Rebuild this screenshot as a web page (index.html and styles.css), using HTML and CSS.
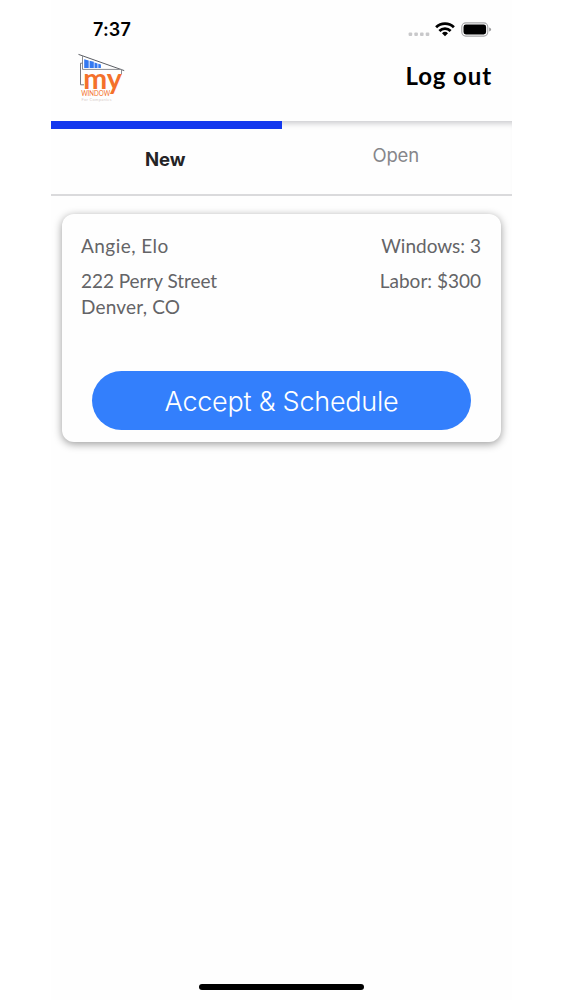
FILE: index.html
```html
<!DOCTYPE html>
<html lang="en">
<head>
    <meta charset="UTF-8">
    <meta name="viewport" content="width=device-width, initial-scale=1.0">
    <title>My Window</title>
    <link rel="stylesheet" href="styles.css">
</head>
<body>

<div class="screen">
    <div class="status-bar">
        <span class="time">7:37</span>
        <svg class="status-icons" width="84" height="20" viewBox="0 0 84 20">
            <g fill="#c8c8ca">
                <rect x="0.6" y="12.5" width="3.6" height="3.6" rx="1"/>
                <rect x="6.3" y="12.5" width="3.6" height="3.6" rx="1"/>
                <rect x="12" y="12.5" width="3.6" height="3.6" rx="1"/>
                <rect x="17.7" y="12.5" width="3.6" height="3.6" rx="1"/>
            </g>
            <g fill="none" stroke="#000" stroke-width="2.8">
                <path d="M28.1 7.3a12.8 12.8 0 0 1 17.8 0"/>
                <path d="M31.4 11a8 8 0 0 1 11.2 0"/>
            </g>
            <path d="M37 16.3l-3-3a4.3 4.3 0 0 1 6 0z"/>
            <rect x="53.8" y="2.9" width="26" height="13.2" rx="4" fill="none" stroke="#a5a5a7" stroke-width="1.1"/>
            <rect x="55.5" y="4.6" width="22.6" height="9.8" rx="2.4"/>
            <path d="M81.2 7.4q1.9.6 1.9 2.1t-1.9 2.1z" fill="#98989a"/>
        </svg>
    </div>

    <div class="header">
        <svg class="logo" width="50" height="50" viewBox="0 0 50 50">
            <g fill="none" stroke="#5a5d63" stroke-width="1">
                <path d="M.5 1.4L46.2 17.6"/>
                <path d="M4.5 3v13.4H43.5v5" stroke="#8a8c91"/>
                <path d="M4.5 10.2H2.5v21.6H6" stroke="#77797e"/>
            </g>
            <path d="M6.2 6.2l4.5 1.2v7.6H6.2zM11.6 7.8l4.2 1V15h-4.2zM16.5 9.5l3 .9V15h-3zM20.3 10.8l2.6.8V15h-2.6z" fill="#3479f0"/>
            <text class="logo-my" x="5.3" y="36" textLength="38.6" lengthAdjust="spacingAndGlyphs">my</text>
            <text class="logo-window" x="3.2" y="43.2" textLength="29" lengthAdjust="spacingAndGlyphs">WINDOW</text>
            <text class="logo-sub" x="3.5" y="48" textLength="30">For Companies</text>
        </svg>
        <a class="logout">Log out</a>
    </div>

    <div class="tabs">
        <div class="tab active">New</div>
        <div class="tab">Open</div>
    </div>

    <div class="content">
        <div class="card">
            <div class="row">
                <span class="name">Angie, Elo</span>
                <span class="windows">Windows: 3</span>
            </div>
            <div class="row">
                <span><span class="street">222 Perry Street</span><br><span class="city">Denver, CO</span></span>
                <span class="labor">Labor: $300</span>
            </div>
            <button class="accept" type="button"><span>Accept &amp; Schedule</span></button>
        </div>
    </div>

    <div class="home-indicator"></div>
</div>

</body>
</html>
```
FILE: styles.css
```css
* {
    box-sizing: border-box;
}
body {
    margin: 0;
    background-color: #fff;
    font-family: Lato, sans-serif;
}
.screen {
    display: flex;
    flex-direction: column;
    width: 461px;
    height: 1000px;
    margin-left: 51px;
    background-color: #fefefe;
}
.status-bar {
    display: flex;
    justify-content: space-between;
    align-items: flex-start;
    height: 52px;
    padding: 20px 20px 0 42px;
}
.time {
    font-family: Inter, sans-serif;
    font-size: 18px;
    font-weight: 600;
    line-height: 20px;
    letter-spacing: 0.15px;
    color: #000;
}
.header {
    display: flex;
    justify-content: space-between;
    height: 69px;
    padding: 0 20px 0 27px;
}
.logo {
    margin-top: 1px;
}
.logo-my {
    font-family: Lato, sans-serif;
    font-size: 29px;
    font-weight: 700;
    fill: #f4712b;
}
.logo-window {
    font-family: Lato, sans-serif;
    font-size: 6.6px;
    fill: #f4712b;
}
.logo-sub {
    font-family: Lato, sans-serif;
    font-size: 4px;
    fill: #d6cdc9;
}
.logout {
    margin-top: 9px;
    font-size: 24px;
    font-weight: 700;
    line-height: 30px;
    letter-spacing: 0.9px;
    color: #000;
}
.tabs {
    display: flex;
    height: 75px;
    border-bottom: 2px solid #dadadc;
    box-shadow: inset 0 7px 6px -5px #c4c4c8;
}
.tab {
    width: 50%;
    padding-top: 22px;
    padding-right: 2px;
    font-family: Inter, sans-serif;
    font-size: 18.5px;
    line-height: 24px;
    letter-spacing: -0.2px;
    text-align: center;
    color: #86868a;
}
.tab.active {
    padding-top: 18px;
    border-top: 8px solid #1338ee;
    background-color: #fefefe;
    font-weight: 700;
    letter-spacing: 0;
    color: #242426;
}
.content {
    flex: 1;
    padding: 18px 11px 0;
}
.card {
    height: 228px;
    padding: 19px 20px 0 19px;
    border-radius: 12px;
    background-color: #fefefe;
    box-shadow: 0 2px 9px rgba(0, 0, 0, 0.4);
}
.row {
    display: flex;
    justify-content: space-between;
    margin-bottom: 9px;
    font-size: 19px;
    line-height: 26px;
    color: #646467;
}
.name {
    letter-spacing: 0.45px;
}
.street {
    letter-spacing: -0.05px;
}
.city {
    letter-spacing: 0.2px;
}
.accept {
    display: block;
    width: 379px;
    height: 59px;
    margin: 51.4px 0 0 11px;
    padding: 1px 0 0;
    border: none;
    border-radius: 30px;
    background-color: #337ffc;
    font-family: Inter, sans-serif;
    font-size: 27px;
    font-weight: 300;
    letter-spacing: -0.25px;
    color: #fff;
}
.home-indicator {
    width: 165px;
    height: 6px;
    margin: 0 auto 10px 148px;
    border-radius: 3px;
    background-color: #000;
}
```
